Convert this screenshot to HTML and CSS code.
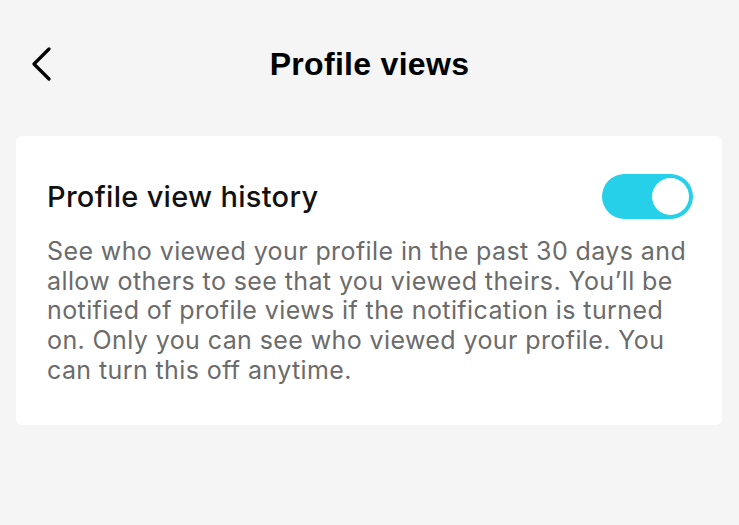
FILE: index.html
```html
<!DOCTYPE html>
<html lang="en">
<head>
    <meta charset="UTF-8">
    <meta name="viewport" content="width=device-width, initial-scale=1.0">
    <title>Profile views</title>
    <link rel="stylesheet" href="styles.css">
</head>
<body>
    <header class="topbar">
        <button class="back" type="button" aria-label="Back">
            <svg width="20" height="34" viewBox="0 0 20 34">
                <path d="M18 2 L3 17 L18 32" fill="none" stroke="#000" stroke-width="3.2" stroke-linecap="round" stroke-linejoin="round"/>
            </svg>
        </button>
        <h1>Profile views</h1>
    </header>

    <section class="card">
        <div class="card-head">
            <h2>Profile view history</h2>
            <label class="switch">
                <input type="checkbox" checked>
                <span class="knob"></span>
            </label>
        </div>
        <p class="desc">See who viewed your profile in the past 30 days and allow others to see that you viewed theirs. You’ll be notified of profile views if the notification is turned on. Only you can see who viewed your profile. You can turn this off anytime.</p>
    </section>
</body>
</html>
```

FILE: styles.css
```css
body {
    margin: 0;
    padding: 0;
    background-color: #f5f5f5;
    font-family: Inter, 'Liberation Sans', sans-serif;
    width: 739px;
    height: 525px;
    overflow: hidden;
}

.topbar {
    position: relative;
    height: 128px;
    display: flex;
    align-items: flex-start;
    justify-content: center;
}

.back {
    position: absolute;
    left: 31px;
    top: 47px;
    background: none;
    border: none;
    padding: 0;
    line-height: 0;
}

h1 {
    margin: 44px 0 0;
    font-family: 'Liberation Sans', Arial, sans-serif;
    font-size: 32px;
    font-weight: bold;
    color: #000;
    line-height: 40px;
    letter-spacing: 0.3px;
}

.card {
    background: #ffffff;
    border-radius: 6px;
    margin: 8px 17px 0 16px;
    padding: 38px 29px 39px 31px;
}

.card-head {
    display: flex;
    align-items: center;
    justify-content: space-between;
}

h2 {
    margin: 0;
    font-size: 29px;
    font-weight: 500;
    color: #111;
    letter-spacing: 0.3px;
}

.switch {
    position: relative;
    width: 91px;
    height: 45px;
}

.switch input {
    display: none;
}

.knob {
    display: block;
    width: 100%;
    height: 100%;
    border-radius: 23px;
    background: #25d0e8;
}

.knob::after {
    content: "";
    position: absolute;
    right: 4px;
    top: 4px;
    width: 37px;
    height: 37px;
    border-radius: 50%;
    background: #fff;
}

.desc {
    margin: 18px 0 0;
    font-size: 25px;
    line-height: 29.7px;
    color: #6b6b6b;
    letter-spacing: 0.4px;
}
```
